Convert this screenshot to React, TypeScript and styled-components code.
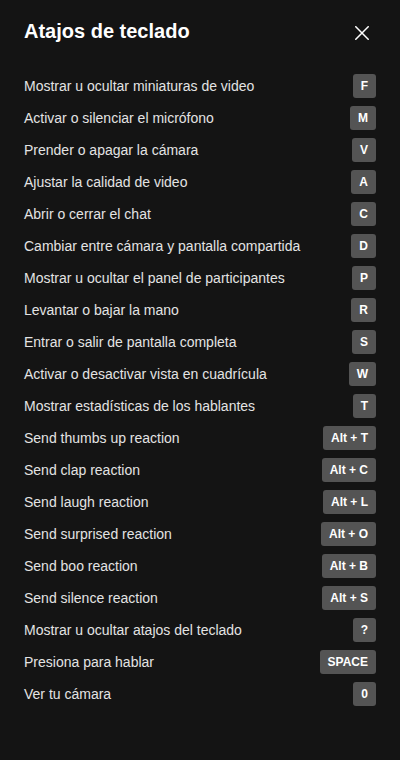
import React from "react";
import styled, { createGlobalStyle } from "styled-components";

const Global = createGlobalStyle`
  html, body { margin: 0; padding: 0; background: #141414; }
  body { font-family: "Liberation Sans", Arial, sans-serif; }
`;

const Panel = styled.div`
  width: 400px;
  height: 760px;
  box-sizing: border-box;
  background: #141414;
  padding: 16px 24px 0;
  display: flex;
  flex-direction: column;
`;

const Header = styled.div`
  height: 30px;
  display: flex;
  align-items: center;
  justify-content: space-between;
  margin-bottom: 24px;
`;

const Title = styled.h2`
  margin: 0;
  font-size: 20px;
  font-weight: 700;
  color: #ffffff;
`;

const CloseButton = styled.button`
  width: 28px;
  height: 28px;
  margin: 4px 0 0 0;
  padding: 0;
  border: none;
  background: transparent;
  display: flex;
  align-items: center;
  justify-content: center;
  cursor: pointer;
`;

const List = styled.div`
  display: flex;
  flex-direction: column;
`;

const Row = styled.div`
  height: 32px;
  display: flex;
  align-items: center;
  justify-content: space-between;
`;

const Label = styled.span`
  font-size: 14px;
  color: #e3e3e3;
`;

const Key = styled.kbd`
  height: 24px;
  box-sizing: border-box;
  padding: 0 8px;
  border-radius: 3px;
  background: #545454;
  color: #ffffff;
  font-family: "Liberation Sans", Arial, sans-serif;
  font-size: 12px;
  font-weight: 700;
  display: flex;
  align-items: center;
  justify-content: center;
`;

const shortcuts: [string, string][] = [
  ["Mostrar u ocultar miniaturas de video", "F"],
  ["Activar o silenciar el micrófono", "M"],
  ["Prender o apagar la cámara", "V"],
  ["Ajustar la calidad de video", "A"],
  ["Abrir o cerrar el chat", "C"],
  ["Cambiar entre cámara y pantalla compartida", "D"],
  ["Mostrar u ocultar el panel de participantes", "P"],
  ["Levantar o bajar la mano", "R"],
  ["Entrar o salir de pantalla completa", "S"],
  ["Activar o desactivar vista en cuadrícula", "W"],
  ["Mostrar estadísticas de los hablantes", "T"],
  ["Send thumbs up reaction", "Alt + T"],
  ["Send clap reaction", "Alt + C"],
  ["Send laugh reaction", "Alt + L"],
  ["Send surprised reaction", "Alt + O"],
  ["Send boo reaction", "Alt + B"],
  ["Send silence reaction", "Alt + S"],
  ["Mostrar u ocultar atajos del teclado", "?"],
  ["Presiona para hablar", "SPACE"],
  ["Ver tu cámara", "0"],
];

export default function App() {
  return (
    <>
      <Global />
      <Panel>
        <Header>
          <Title>Atajos de teclado</Title>
          <CloseButton aria-label="Cerrar">
            <svg width="14" height="14" viewBox="0 0 14 14">
              <path d="M0.8 0.8 L13.2 13.2 M13.2 0.8 L0.8 13.2" stroke="#ffffff" strokeWidth="1.5" strokeLinecap="square" />
            </svg>
          </CloseButton>
        </Header>
        <List>
          {shortcuts.map(([label, key]) => (
            <Row key={label}>
              <Label>{label}</Label>
              <Key>{key}</Key>
            </Row>
          ))}
        </List>
      </Panel>
    </>
  );
}
